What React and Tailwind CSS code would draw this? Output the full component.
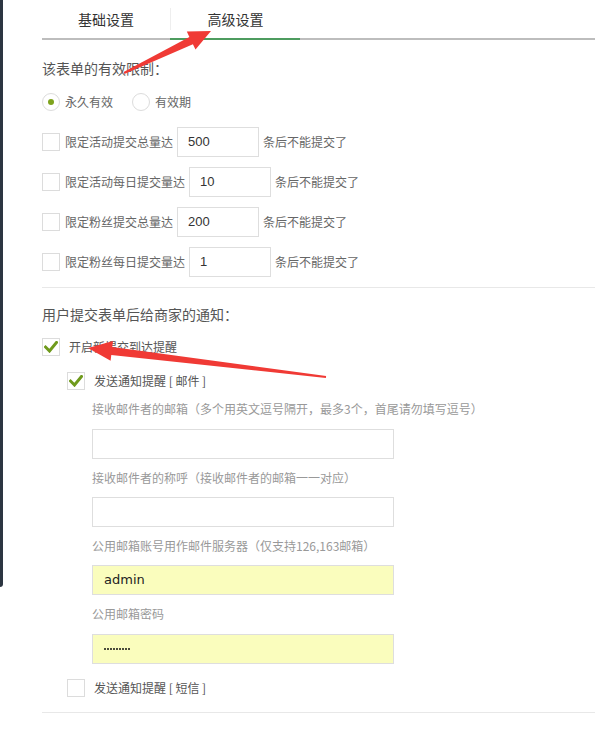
import React from 'react';

const font = { fontFamily: '"Noto Sans CJK SC", "Microsoft YaHei", sans-serif' };
const latin = { fontFamily: '"Liberation Sans", Arial, "Noto Sans CJK SC", sans-serif' };

// polygon for a tapered annotation arrow
const arrowPoints = (tx, ty, hx, hy, headLen = 22, headW = 20, tailW = 2, neckW = 8) => {
  const dx = hx - tx, dy = hy - ty;
  const len = Math.hypot(dx, dy);
  const ux = dx / len, uy = dy / len;
  const nx = -uy, ny = ux;
  const bx = hx - ux * headLen, by = hy - uy * headLen;
  const p = (x, y) => `${x.toFixed(1)},${y.toFixed(1)}`;
  return [
    p(tx + nx * tailW / 2, ty + ny * tailW / 2),
    p(bx + nx * neckW / 2, by + ny * neckW / 2),
    p(bx + nx * headW / 2, by + ny * headW / 2),
    p(hx, hy),
    p(bx - nx * headW / 2, by - ny * headW / 2),
    p(bx - nx * neckW / 2, by - ny * neckW / 2),
    p(tx - nx * tailW / 2, ty - ny * tailW / 2),
  ].join(' ');
};

const Check = ({ checked }) => (
  <span className="w-[18px] h-[18px] border border-[#dcdcdc] bg-white flex items-center justify-center shrink-0">
    {checked && (
      <svg width="14" height="12" viewBox="0 0 14 12">
        <path d="M1.5 6 L5.5 10 L12.5 1.5" fill="none" stroke="#6f9a1c" strokeWidth="3" strokeLinecap="square" />
      </svg>
    )}
  </span>
);

const Radio = ({ checked }) => (
  <span className="w-[18px] h-[18px] rounded-full border border-[#dcdcdc] bg-white flex items-center justify-center shrink-0">
    {checked && <span className="w-[6px] h-[6px] rounded-full bg-[#7ea31d]" />}
  </span>
);

const limits = [
  { label: '限定活动提交总量达', val: '500' },
  { label: '限定活动每日提交量达', val: '10' },
  { label: '限定粉丝提交总量达', val: '200' },
  { label: '限定粉丝每日提交量达', val: '1' },
];

const Field = ({ children, yellow }) => (
  <div className={`w-[302px] h-[30px] border border-[#dedede] flex items-center pl-[11px] text-[13px] text-[#222] ${yellow ? 'bg-[#fafdbd]' : 'bg-white'}`}
    style={{ fontFamily: 'Verdana, "DejaVu Sans", sans-serif' }}>
    {children}
  </div>
);

export default function App() {
  return (
    <div className="relative w-[595px] h-[750px] bg-white overflow-hidden flex" style={font}>
      {/* left frame edge */}
      <div className="w-[3px] h-[587px] bg-[#2c3541] rounded-br-[3px] shrink-0" />

      <div className="flex-1 pl-[39px]">
        {/* tabs */}
        <div className="relative h-[41px] flex">
          <div className="w-[128px] flex items-center justify-center text-[14px] text-[#333] pb-[3px]">基础设置</div>
          <div className="w-px h-[22px] bg-[#eeeeee] mt-[8px]" />
          <div className="w-[129px] flex items-center justify-center text-[14px] text-[#333] pb-[3px]">高级设置</div>
          <div className="absolute left-0 right-0 bottom-[1px] h-[2px] bg-[#bdbdbd]" />
          <div className="absolute left-[128px] w-[130px] bottom-[1px] h-[2px] bg-[#4e9c5f]" />
        </div>

        <div className="text-[14px] text-[#555] mt-[17px] leading-[20px]">该表单的有效限制：</div>

        <div className="flex items-center mt-[14px] h-[20px] text-[12px] text-[#666]">
          <Radio checked />
          <span className="ml-[5px]">永久有效</span>
          <span className="ml-[19px]"><Radio /></span>
          <span className="ml-[5px]">有效期</span>
        </div>

        <div className="flex flex-col gap-[10px] mt-[15px]">
          {limits.map(({ label, val }) => (
            <div key={label} className="flex items-center h-[30px] text-[12px] text-[#666]">
              <Check />
              <span className="ml-[5px]">{label}</span>
              <div className="ml-[4px] w-[82px] h-[30px] border border-[#dedede] flex items-center pl-[10px] text-[13px] text-[#333]" style={latin}>{val}</div>
              <span className="ml-[4px]">条后不能提交了</span>
            </div>
          ))}
        </div>

        <div className="h-px bg-[#e8e8e8] mt-[10px]" />

        <div className="text-[14px] text-[#555] mt-[16px] leading-[20px]">用户提交表单后给商家的通知：</div>

        <div className="flex items-center mt-[14px] text-[12px] text-[#555]">
          <Check checked />
          <span className="ml-[9px]">开启新提交到达提醒</span>
        </div>

        <div className="pl-[25px]">
          <div className="flex items-center mt-[16px] text-[12px] text-[#555]">
            <Check checked />
            <span className="ml-[9px]">发送通知提醒 [ 邮件 ]</span>
          </div>

          <div className="pl-[25px]">
            <div className="text-[12px] text-[#999] mt-[9px] leading-[20px]">接收邮件者的邮箱（多个用英文逗号隔开，最多3个，首尾请勿填写逗号）</div>
            <div className="mt-[10px]"><Field /></div>

            <div className="text-[12px] text-[#999] mt-[9px] leading-[20px]">接收邮件者的称呼（接收邮件者的邮箱一一对应）</div>
            <div className="mt-[9px]"><Field /></div>

            <div className="text-[12px] text-[#999] mt-[9px] leading-[20px]">公用邮箱账号用作邮件服务器（仅支持126,163邮箱）</div>
            <div className="mt-[9px]"><Field yellow>admin</Field></div>

            <div className="text-[12px] text-[#999] mt-[9px] leading-[20px]">公用邮箱密码</div>
            <div className="mt-[10px]">
              <Field yellow>
                <span className="flex gap-[1px]">
                  {Array.from({ length: 9 }).map((_, i) => (
                    <span key={i} className="w-[2px] h-[2px] rounded-full bg-[#111]" />
                  ))}
                </span>
              </Field>
            </div>
          </div>

          <div className="flex items-center mt-[15px] text-[12px] text-[#555]">
            <Check />
            <span className="ml-[9px]">发送通知提醒 [ 短信 ]</span>
          </div>
        </div>

        <div className="h-px bg-[#e8e8e8] mt-[15px]" />
      </div>

      {/* red annotation arrows */}
      <svg className="absolute inset-0 pointer-events-none" width="595" height="750">
        <polygon points={arrowPoints(124, 73, 211, 31, 22, 20, 2, 8)} fill="#f03a35" />
        <polygon points={arrowPoints(326, 377, 88, 348, 24, 20, 2, 8)} fill="#f03a35" />
      </svg>
    </div>
  );
}
